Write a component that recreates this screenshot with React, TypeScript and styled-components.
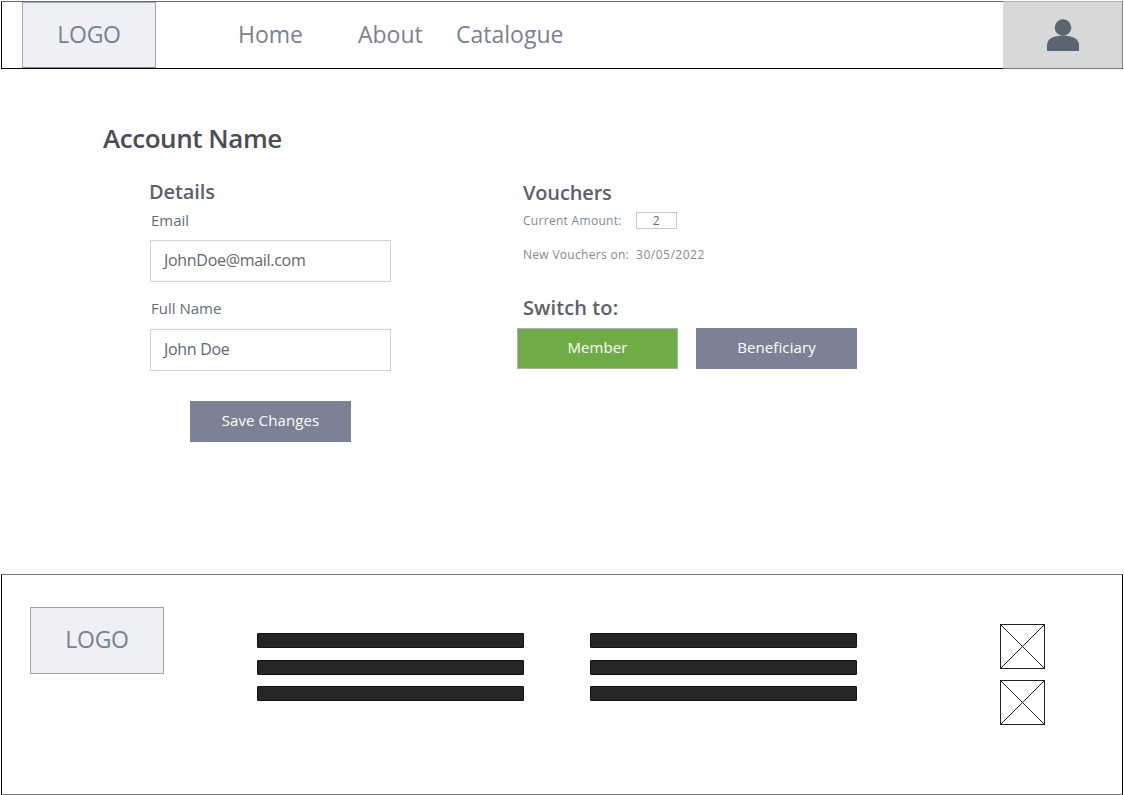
import React from "react";
import styled, { createGlobalStyle } from "styled-components";

const Global = createGlobalStyle`
  html, body { margin: 0; padding: 0; background: #fff; }
  body { font-family: "Open Sans", "Noto Sans", "Liberation Sans", sans-serif; }
  * { box-sizing: border-box; }
`;

const Page = styled.div`
  width: 1124px;
  height: 795px;
  padding: 1px 0 0 1px;
  display: flex;
  flex-direction: column;
`;

const Header = styled.header`
  width: 1122px;
  height: 68px;
  border: 1px solid #000;
  border-top-color: #666;
  border-right-color: #888;
  display: flex;
  align-items: stretch;
  padding-left: 20px;
`;

const HeaderLogo = styled.div`
  width: 134px;
  background: #eff0f4;
  border: 1px solid #a6abb8;
  border-bottom-color: #8a8f9c;
  display: flex;
  align-items: center;
  justify-content: center;
  color: #7b8092;
  font-size: 23px;
  letter-spacing: -0.3px;
  padding-bottom: 3px;
`;

const Nav = styled.nav`
  display: flex;
  align-items: center;
  margin-left: 82px;
  flex: 1;
  padding-bottom: 3px;
`;

const NavLink = styled.a<{ $w: number }>`
  width: ${(p) => p.$w}px;
  color: #7b8092;
  font-size: 23px;
`;

const UserBox = styled.div`
  width: 119px;
  background: #d8d8d8;
  margin: -1px 0 -1px 0;
  border-top: 1px solid #b0b0b0;
  border-bottom: 1px solid #777;
  display: flex;
  align-items: center;
  justify-content: center;
`;

const Main = styled.main`
  height: 505px;
  padding: 52px 0 0 102px;
`;

const Title = styled.h1`
  margin: 0;
  height: 34px;
  line-height: 34px;
  font-size: 26px;
  font-weight: 600;
  letter-spacing: -0.45px;
  color: #4a4d55;
`;

const Columns = styled.div`
  display: flex;
  margin-top: 23px;
  padding-left: 47px;
`;

const Left = styled.section`
  width: 373px;
  display: flex;
  flex-direction: column;
`;

const Right = styled.section`
  display: flex;
  flex-direction: column;
`;

const SubTitle = styled.h2`
  margin: 0;
  font-size: 20px;
  line-height: 28px;
  font-weight: 600;
  letter-spacing: -0.1px;
  color: #5c606c;
`;

const DetailsTitle = styled(SubTitle)`
  margin: 0 0 4px -1px;
`;

const FieldLabel = styled.label`
  display: block;
  margin: 0 0 0 1px;
  font-size: 15px;
  line-height: 20px;
  color: #666b78;
`;

const Field = styled.div`
  width: 241px;
  height: 42px;
  margin-top: 10px;
  border: 1px solid #d0d1dc;
  background: #fff;
  display: flex;
  align-items: center;
  padding: 0 13px 2px;
  font-size: 16px;
  letter-spacing: -0.3px;
  color: #636775;
`;

const FullNameLabel = styled(FieldLabel)`
  margin-top: 16px;
  margin-bottom: 1px;
`;

const Button = styled.button<{ $green?: boolean }>`
  width: 161px;
  height: 41px;
  border: 1px solid ${(p) => (p.$green ? "#a9b1b5" : "#7c8195")};
  background: ${(p) => (p.$green ? "#6fac46" : "#7c8195")};
  color: #fff;
  font-family: inherit;
  font-size: 15px;
  letter-spacing: 0.1px;
  padding: 0 0 3px;
`;

const SaveButton = styled(Button)`
  margin: 30px 0 0 40px;
`;

const VoucherTitle = styled(SubTitle)`
  margin: 1px 0 5px;
  letter-spacing: -0.15px;
`;

const InfoRow = styled.div`
  display: flex;
  align-items: center;
  height: 17px;
  font-size: 12px;
  color: #858998;
  letter-spacing: 0.3px;
`;

const DateRow = styled(InfoRow)`
  margin-top: 17px;
`;

const AmountBox = styled.div`
  width: 41px;
  height: 17px;
  margin-left: 14px;
  border: 1px solid #c6c8d6;
  display: flex;
  align-items: center;
  justify-content: center;
  color: #5a6a95;
`;

const DateValue = styled.span`
  margin-left: 7px;
  letter-spacing: 0.5px;
`;

const SwitchTitle = styled(SubTitle)`
  margin-top: 31px;
  letter-spacing: 0.1px;
`;

const ButtonRow = styled.div`
  display: flex;
  gap: 18px;
  margin: 6px 0 0 -6px;
`;

const Footer = styled.footer`
  width: 1122px;
  height: 221px;
  border: 1px solid #000;
  border-top-color: #777;
  border-bottom-color: #777;
  display: flex;
  align-items: flex-start;
`;

const FooterLogo = styled.div`
  width: 134px;
  height: 67px;
  margin: 32px 0 0 28px;
  background: #eff0f4;
  border: 1px solid #a0a3b2;
  display: flex;
  align-items: center;
  justify-content: center;
  color: #7b8092;
  font-size: 23px;
  letter-spacing: -0.3px;
  padding-bottom: 3px;
`;

const LinkColumn = styled.div<{ $left: number }>`
  width: 267px;
  margin: 58px 0 0 ${(p) => p.$left}px;
  display: flex;
  flex-direction: column;
  gap: 11.5px;
`;

const LinkBar = styled.div`
  height: 15px;
  background: #262626;
  border: 1px solid #111;
  border-radius: 1px;
`;

const Squares = styled.div`
  margin: 49px 0 0 143px;
  display: flex;
  flex-direction: column;
  gap: 11px;
`;

const PlaceholderSvg = styled.svg`
  display: block;
  width: 45px;
  height: 45px;
`;

const UserIcon = () => (
  <svg width="34" height="34" viewBox="0 0 34 34" fill="#5b6471" aria-hidden="true">
    <circle cx="17" cy="9.5" r="8.3" />
    <path d="M1 33V27C1 21 7.5 17.5 17 17.5S33 21 33 27V33Z" />
  </svg>
);

const Placeholder = () => (
  <PlaceholderSvg viewBox="0 0 45 45" fill="none" stroke="#222" aria-hidden="true">
    <rect x="0.5" y="0.5" width="44" height="44" />
    <path d="M0.5 0.5L44.5 44.5M44.5 0.5L0.5 44.5" />
  </PlaceholderSvg>
);

const Links = ({ left }: { left: number }) => (
  <LinkColumn $left={left}>
    <LinkBar />
    <LinkBar />
    <LinkBar />
  </LinkColumn>
);

export default function App() {
  return (
    <Page>
      <Global />
      <Header>
        <HeaderLogo>LOGO</HeaderLogo>
        <Nav>
          <NavLink $w={120}>Home</NavLink>
          <NavLink $w={98}>About</NavLink>
          <NavLink $w={120}>Catalogue</NavLink>
        </Nav>
        <UserBox>
          <UserIcon />
        </UserBox>
      </Header>
      <Main>
        <Title>Account Name</Title>
        <Columns>
          <Left>
            <DetailsTitle>Details</DetailsTitle>
            <FieldLabel>Email</FieldLabel>
            <Field>JohnDoe@mail.com</Field>
            <FullNameLabel>Full Name</FullNameLabel>
            <Field>John Doe</Field>
            <SaveButton>Save Changes</SaveButton>
          </Left>
          <Right>
            <VoucherTitle>Vouchers</VoucherTitle>
            <InfoRow>
              Current Amount:
              <AmountBox>2</AmountBox>
            </InfoRow>
            <DateRow>
              New Vouchers on:
              <DateValue>30/05/2022</DateValue>
            </DateRow>
            <SwitchTitle>Switch to:</SwitchTitle>
            <ButtonRow>
              <Button $green>Member</Button>
              <Button>Beneficiary</Button>
            </ButtonRow>
          </Right>
        </Columns>
      </Main>
      <Footer>
        <FooterLogo>LOGO</FooterLogo>
        <Links left={93} />
        <Links left={66} />
        <Squares>
          <Placeholder />
          <Placeholder />
        </Squares>
      </Footer>
    </Page>
  );
}
